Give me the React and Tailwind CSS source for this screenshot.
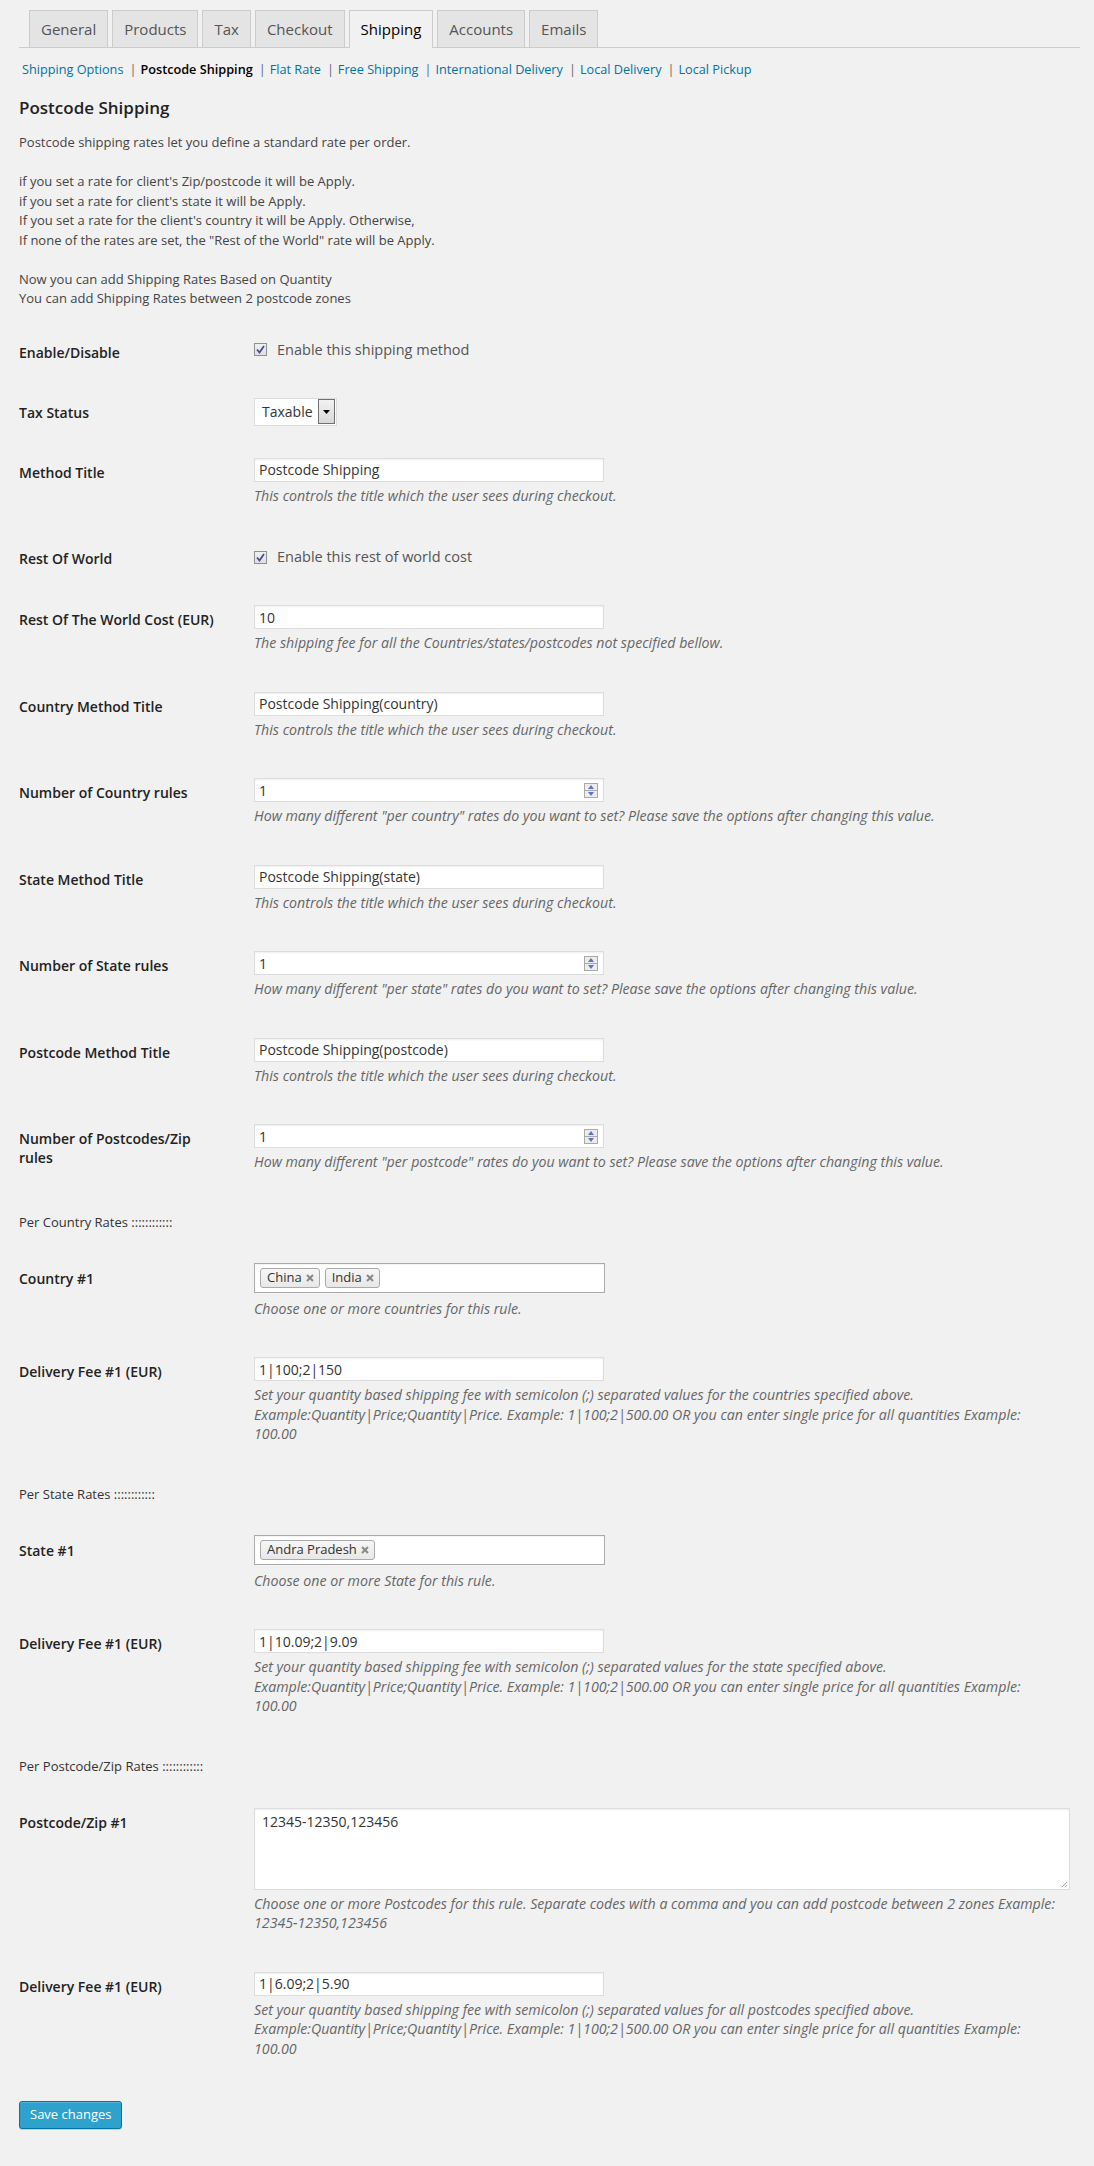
import React from 'react';

const tabs = ['General', 'Products', 'Tax', 'Checkout', 'Shipping', 'Accounts', 'Emails'];

const sections = [
  { label: 'Shipping Options' },
  { label: 'Postcode Shipping', current: true },
  { label: 'Flat Rate' },
  { label: 'Free Shipping' },
  { label: 'International Delivery' },
  { label: 'Local Delivery' },
  { label: 'Local Pickup' },
];

function Label({ children }) {
  return (
    <div className="w-[200px] pt-[19px] text-[14px] font-semibold leading-[19px] text-[#222]">
      {children}
    </div>
  );
}

function Row({ label, children, tdClass = 'pt-[14px] pb-[25px]' }) {
  return (
    <div className="grid grid-cols-[235px_1fr]">
      <Label>{label}</Label>
      <div className={`pr-[10px] ${tdClass}`}>{children}</div>
    </div>
  );
}

function Help({ children, className = 'mt-[4px]' }) {
  return <p className={`${className} text-[14.2px] italic leading-[19.5px] text-[#666]`}>{children}</p>;
}

function TextBox({ value, children }) {
  return (
    <div className="flex h-[24px] w-[350px] items-center border border-[#ddd] bg-white px-[4px] text-[14px] text-[#333] shadow-[inset_0_1px_2px_rgba(0,0,0,0.07)]">
      <span className="flex-1 whitespace-nowrap">{value}</span>
      {children}
    </div>
  );
}

function Spinner() {
  return (
    <div className="mr-[1px] flex h-[15px] w-[14px] flex-col">
      <div className="flex flex-1 items-center justify-center border border-[#a9a9a9] bg-[#ececec]">
        <svg width="6" height="4" viewBox="0 0 6 4"><path d="M3 0L6 4H0z" fill="#5b74c4" /></svg>
      </div>
      <div className="-mt-px flex flex-1 items-center justify-center border border-[#a9a9a9] bg-[#ececec]">
        <svg width="6" height="4" viewBox="0 0 6 4"><path d="M0 0H6L3 4z" fill="#5b74c4" /></svg>
      </div>
    </div>
  );
}

function NumberBox({ value }) {
  return (
    <TextBox value={value}>
      <Spinner />
    </TextBox>
  );
}

function Checkbox({ text }) {
  return (
    <label className="flex items-center text-[14.5px] leading-[20px] text-[#555]">
      <span className="mr-[10px] flex h-[13px] w-[13px] items-center justify-center border border-[#8e8f8f] bg-gradient-to-b from-[#f0f0f0] to-[#e0e0e0]">
        <svg width="9" height="9" viewBox="0 0 9 9">
          <path d="M1 4.5L3.5 7.5L8 1" fill="none" stroke="#44508f" strokeWidth="1.8" />
        </svg>
      </span>
      {text}
    </label>
  );
}

function Tag({ text }) {
  return (
    <span className="flex h-[20px] items-center gap-[4px] rounded-[3px] border border-[#aaa] bg-gradient-to-b from-[#f6f6f6] to-[#e8e8e8] pl-[6px] pr-[5px] text-[13px] text-[#333]">
      {text}
      <svg width="8" height="8" viewBox="0 0 8 8">
        <path d="M1 1L7 7M7 1L1 7" stroke="#888" strokeWidth="2" />
      </svg>
    </span>
  );
}

function MultiSelect({ items }) {
  return (
    <div className="-mt-px flex h-[30px] w-[351px] items-center gap-[5px] border border-[#aaa] bg-white pl-[5px] shadow-[inset_0_1px_1px_rgba(0,0,0,0.05)]">
      {items.map((t) => (
        <Tag key={t} text={t} />
      ))}
    </div>
  );
}

function RatesHeading({ children }) {
  return <p className="mb-[18px] mt-[15px] text-[13px] leading-[20px] text-[#333]">{children}</p>;
}

function FeeHelp({ target }) {
  return (
    <Help>
      Set your quantity based shipping fee with semicolon (;) separated values for {target} specified above.
      <br />
      Example:Quantity|Price;Quantity|Price. Example: 1|100;2|500.00 OR you can enter single price for all quantities Example:
      <br />
      100.00
    </Help>
  );
}

export default function App() {
  return (
    <div className="min-h-[2166px] bg-[#f1f1f1] pl-[19px] pr-[14px] pt-[10px] font-['Open_Sans',sans-serif] text-[#444]">
      {/* tabs */}
      <div className="flex items-end gap-[4px] border-b border-[#ccc] pl-[10px]">
        {tabs.map((t) =>
          t === 'Shipping' ? (
            <div key={t} className="-mb-px h-[38px] border border-b-0 border-[#ccc] bg-[#f1f1f1] px-[11px] pt-[6px] text-[15px] leading-[24px] text-[#000]">
              {t}
            </div>
          ) : (
            <div key={t} className="h-[37px] border border-b-0 border-[#ccc] bg-[#e4e4e4] px-[11px] pt-[6px] text-[15px] leading-[24px] text-[#555]">
              {t}
            </div>
          )
        )}
      </div>

      {/* sub navigation */}
      <div className="mt-[11px] flex pl-[3px] text-[12.7px] leading-[20px]">
        {sections.map((s, i) => (
          <span key={s.label} className="flex">
            <a className={s.current ? 'font-semibold text-[#000]' : 'text-[#0074a2]'}>{s.label}</a>
            {i < sections.length - 1 && <span className="ml-[6px] mr-[4px] text-[#666]">|</span>}
          </span>
        ))}
      </div>

      <h3 className="mt-[18px] text-[17px] font-semibold leading-[22px] text-[#222]">Postcode Shipping</h3>

      <p className="mt-[14px] text-[13px] leading-[19.5px] text-[#444]">
        Postcode shipping rates let you define a standard rate per order.
        <br />
        <br />
        if you set a rate for client's Zip/postcode it will be Apply.
        <br />
        if you set a rate for client's state it will be Apply.
        <br />
        If you set a rate for the client's country it will be Apply. Otherwise,
        <br />
        If none of the rates are set, the "Rest of the World" rate will be Apply.
        <br />
        <br />
        Now you can add Shipping Rates Based on Quantity
        <br />
        You can add Shipping Rates between 2 postcode zones
      </p>

      <div className="mt-[15px]">
        <Row label="Enable/Disable" tdClass="pt-[16px] pb-[24px]">
          <Checkbox text="Enable this shipping method" />
        </Row>

        <Row label="Tax Status" tdClass="pt-[14px] pb-[18px]">
          <div className="flex h-[28px] w-[83px] items-center justify-between border border-[#ddd] bg-white pl-[7px] pr-px">
            <span className="text-[14px] text-[#333]">Taxable</span>
            <span className="flex h-[25px] w-[17px] items-center justify-center border border-[#707070] bg-gradient-to-b from-[#f2f2f2] to-[#d8d8d8]">
              <svg width="7" height="4" viewBox="0 0 7 4"><path d="M0 0H7L3.5 4z" fill="#000" /></svg>
            </span>
          </div>
        </Row>

        <Row label="Method Title">
          <TextBox value="Postcode Shipping" />
          <Help>This controls the title which the user sees during checkout.</Help>
        </Row>

        <Row label="Rest Of World" tdClass="pt-[17px] pb-[24px]">
          <Checkbox text="Enable this rest of world cost" />
        </Row>

        <Row label="Rest Of The World Cost (EUR)">
          <TextBox value="10" />
          <Help>The shipping fee for all the Countries/states/postcodes not specified bellow.</Help>
        </Row>

        <Row label="Country Method Title">
          <TextBox value="Postcode Shipping(country)" />
          <Help>This controls the title which the user sees during checkout.</Help>
        </Row>

        <Row label="Number of Country rules">
          <NumberBox value="1" />
          <Help>How many different "per country" rates do you want to set? Please save the options after changing this value.</Help>
        </Row>

        <Row label="State Method Title">
          <TextBox value="Postcode Shipping(state)" />
          <Help>This controls the title which the user sees during checkout.</Help>
        </Row>

        <Row label="Number of State rules">
          <NumberBox value="1" />
          <Help>How many different "per state" rates do you want to set? Please save the options after changing this value.</Help>
        </Row>

        <Row label="Postcode Method Title">
          <TextBox value="Postcode Shipping(postcode)" />
          <Help>This controls the title which the user sees during checkout.</Help>
        </Row>

        <Row label="Number of Postcodes/Zip rules">
          <NumberBox value="1" />
          <Help>How many different "per postcode" rates do you want to set? Please save the options after changing this value.</Help>
        </Row>

        <RatesHeading>Per Country Rates ::::::::::::</RatesHeading>

        <Row label="Country #1">
          <MultiSelect items={['China', 'India']} />
          <Help className="mt-[6px]">Choose one or more countries for this rule.</Help>
        </Row>

        <Row label="Delivery Fee #1 (EUR)">
          <TextBox value="1|100;2|150" />
          <FeeHelp target="the countries" />
        </Row>

        <RatesHeading>Per State Rates ::::::::::::</RatesHeading>

        <Row label="State #1">
          <MultiSelect items={['Andra Pradesh']} />
          <Help className="mt-[6px]">Choose one or more State for this rule.</Help>
        </Row>

        <Row label="Delivery Fee #1 (EUR)">
          <TextBox value="1|10.09;2|9.09" />
          <FeeHelp target="the state" />
        </Row>

        <RatesHeading>Per Postcode/Zip Rates ::::::::::::</RatesHeading>

        <Row label="Postcode/Zip #1">
          <div className="relative h-[82px] w-full border border-[#ddd] bg-white px-[7px] py-[3px] text-[14px] leading-[20px] text-[#333] shadow-[inset_0_1px_2px_rgba(0,0,0,0.07)]">
            12345-12350,123456
            <svg className="absolute bottom-[1px] right-[1px]" width="7" height="7" viewBox="0 0 7 7">
              <path d="M6 1L1 6M6 4L4 6" stroke="#aaa" strokeWidth="1" />
            </svg>
          </div>
          <Help>
            Choose one or more Postcodes for this rule. Separate codes with a comma and you can add postcode between 2 zones Example:
            <br />
            12345-12350,123456
          </Help>
        </Row>

        <Row label="Delivery Fee #1 (EUR)">
          <TextBox value="1|6.09;2|5.90" />
          <FeeHelp target="all postcodes" />
        </Row>
      </div>

      <button className="mt-[18px] h-[28px] rounded-[3px] border border-[#0074a2] bg-[#2ea2cc] px-[10px] text-[13px] text-white shadow-[inset_0_1px_0_rgba(120,200,230,0.5),0_1px_0_rgba(0,0,0,0.15)]">
        Save changes
      </button>
    </div>
  );
}
